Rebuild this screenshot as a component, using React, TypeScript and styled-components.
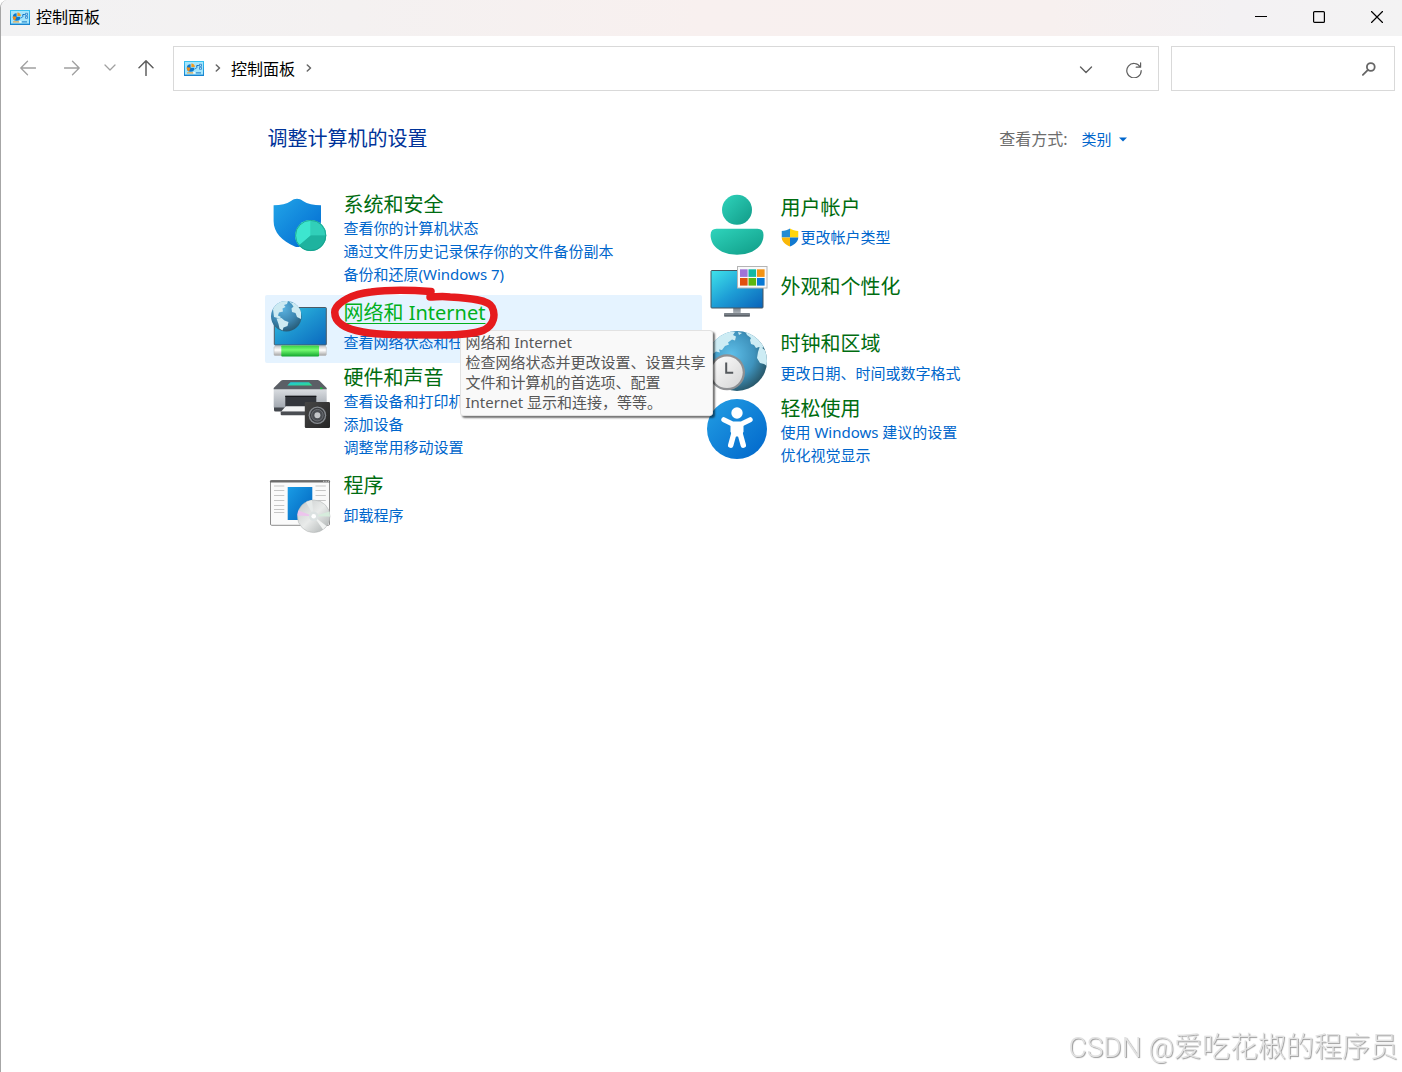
import React from 'react';
import styled, { createGlobalStyle } from 'styled-components';

const GlobalStyle = createGlobalStyle`
  *, *::before, *::after { box-sizing: border-box; }
  html, body { margin: 0; padding: 0; background: #ffffff; }
  body, button, input, select {
    font-family: "Noto Sans", "Noto Sans CJK SC", sans-serif;
    font-weight: 400;
  }
  button, select { margin: 0; padding: 0; border: 0; background: transparent; }
  svg { display: block; flex: none; }
`;

/* ---------- window frame ---------- */

const Window = styled.div`
  min-height: 100vh;
  border-left: 1px solid #a6a6a6;
  border-top-left-radius: 8px;
  background: #ffffff;
  overflow: hidden;
`;

const TitleBar = styled.header`
  display: flex;
  align-items: center;
  justify-content: space-between;
  height: 36px;
  padding: 0 0 2px 9px;
  background: linear-gradient(90deg, #f2f2f3 0%, #f4f1f1 25%, #f8f0ef 50%, #f7f0ef 75%, #f3f1f3 88%, #f3f3f3 100%);
`;

const Title = styled.h1`
  display: flex;
  align-items: center;
  gap: 6px;
  margin: 0;
  font-size: 16px;
  line-height: 24px;
  font-weight: 400;
  color: #000000;
`;

const WindowControls = styled.div`
  display: flex;
  margin-right: -4px;
`;

const ControlButton = styled.button`
  display: flex;
  align-items: center;
  justify-content: center;
  width: 58px;
  height: 34px;
  color: #000000;
`;

/* ---------- navigation ---------- */

const NavBar = styled.nav`
  display: flex;
  align-items: center;
  padding: 10px 7px 10px 5px;
`;

const NavButton = styled.button<{ $width: number; $active?: boolean }>`
  display: flex;
  align-items: center;
  justify-content: center;
  width: ${p => p.$width}px;
  height: 44px;
  padding-bottom: 2px;
  color: ${p => (p.$active ? '#5f5f5f' : '#a0a0a0')};
`;

const AddressButton = styled(NavButton)`
  height: 43px;
  padding: 2px 0 0;
`;

const AddressBar = styled.div`
  display: flex;
  align-items: center;
  flex: 1;
  height: 45px;
  margin: 0 12px 0 7px;
  padding: 0 0 0 10px;
  border: 1px solid #d9d9d9;
  color: #666666;
`;

const Crumb = styled.button`
  font-size: 16px;
  line-height: 24px;
  color: #000000;
`;

const CrumbArrow = styled.span`
  display: flex;
  justify-content: center;
  width: 27px;
  padding-bottom: 2px;
`;

const Spacer = styled.div`
  flex: 1;
`;

const SearchBox = styled.label`
  display: flex;
  align-items: center;
  width: 224px;
  height: 45px;
  padding: 0 18px 0 10px;
  border: 1px solid #d9d9d9;
  color: #666666;
`;

const SearchInput = styled.input`
  flex: 1;
  min-width: 0;
  border: 0;
  outline: 0;
  background: transparent;
  font-size: 15px;
`;

/* ---------- content ---------- */

const Content = styled.main`
  max-width: 874px;
  margin: 0 auto;
  padding-top: 26px;
`;

const ContentHeader = styled.div`
  display: flex;
  align-items: center;
  justify-content: space-between;
  padding: 0 10px 0 3px;
  margin-bottom: 39px;
`;

const PageHeading = styled.h2`
  margin: 0;
  font-size: 20px;
  line-height: 24px;
  font-weight: 400;
  color: #003399;
`;

const ViewBy = styled.div`
  display: flex;
  align-items: center;
  font-size: 15px;
  line-height: 24px;
  color: #6d6d6d;
`;

const ViewLabel = styled.label`
  margin-right: 14px;
  font-size: 16px;
`;

const ViewSelect = styled.select`
  appearance: none;
  font-size: 15px;
  line-height: 24px;
  color: #0066cc;
`;

const Caret = styled.svg`
  margin-left: 6px;
  margin-right: 2px;
  pointer-events: none;
`;

const Columns = styled.div`
  display: grid;
  grid-template-columns: 1fr 1fr;
  align-items: start;
`;

const Category = styled.section<{ $hot?: boolean }>`
  position: relative;
  display: flex;
  gap: 11px;
  min-height: 68px;
  border-radius: 2px;
  background: ${p => (p.$hot ? '#e5f3ff' : 'transparent')};
`;

type Spread = 'list' | 'pair' | 'alone';
const topPadding: Record<Spread, number> = { list: 3, pair: 6, alone: 17 };

const CategoryText = styled.div<{ $spread: Spread }>`
  display: flex;
  flex-direction: column;
  align-items: flex-start;
  padding-top: ${p => topPadding[p.$spread]}px;
  padding-bottom: ${p => (p.$spread === 'list' ? 9 : 0)}px;
`;

const CategoryTitle = styled.a<{ $hot?: boolean; $spread: Spread }>`
  margin-bottom: ${p => (p.$spread === 'pair' ? 6 : 0)}px;
  font-size: 20px;
  line-height: 24px;
  white-space: nowrap;
  color: ${p => (p.$hot ? '#00b01c' : '#006c10')};
  text-decoration: ${p => (p.$hot ? 'underline' : 'none')};
  text-decoration-thickness: 1px;
  text-underline-offset: 3px;
`;

const TaskLink = styled.a`
  display: flex;
  align-items: center;
  gap: 2px;
  font-size: 15px;
  line-height: 23px;
  white-space: nowrap;
  color: #0066cc;
  text-decoration: none;
`;

const Tooltip = styled.div`
  position: absolute;
  left: 195px;
  top: 35px;
  z-index: 2;
  width: 253px;
  padding: 1px 4px 3px 5px;
  border: 1px solid #e2e2e2;
  border-radius: 3px;
  background: #f9f9f9;
  box-shadow: 2px 2px 2px rgba(0, 0, 0, 0.55);
  font-size: 15px;
  line-height: 20px;
  color: #575757;
`;

const Scribble = styled.svg`
  position: absolute;
  left: 65px;
  top: -10px;
  z-index: 3;
  pointer-events: none;
`;

const Watermark = styled.div`
  position: fixed;
  right: 4px;
  bottom: 4px;
  font-family: Roboto, "Noto Sans CJK SC", sans-serif;
  font-size: 28px;
  line-height: 40px;
  font-weight: 300;
  color: #e2e2e2;
  text-shadow: 1px 1px 1px #999999;
  white-space: nowrap;
`;

/* ---------- drawings ---------- */

const PanelIcon = ({ id }: { id: string }) => (
  <svg width="20" height="15" viewBox="0 0 20 15" aria-hidden="true">
    <defs>
      <linearGradient id={id} x1="0" y1="0" x2="0" y2="1">
        <stop offset="0" stopColor="#38c3f2" />
        <stop offset="1" stopColor="#1681cf" />
      </linearGradient>
    </defs>
    <rect width="20" height="15" fill={`url(#${id})`} />
    <rect x="1" y="1" width="18" height="12.6" fill="#a5e5fb" />
    <path d="M6.600 3.200v3.600h3.800A3.800 3.800 0 1 1 6.600 3.200z" fill="#0c78cc" />
    <path d="M3 6.200a3.600 3.600 0 0 0 2 4.200l1.600-3.600z" fill="#ee8b16" />
    <path d="M7.400 2.600A3.500 3.500 0 0 1 10.800 6H7.400z" fill="#f29a1f" />
    <path d="M11 8.300l1.800-1.800V4.500h2" fill="none" stroke="#1270c2" strokeWidth="1" />
    <path d="M15.500 3.300h2v2h-2zM15.500 6.300h2v2h-2z" fill="#c9effc" stroke="#1270c2" strokeWidth="0.700" />
    <path d="M3 11.900h7" stroke="#f49b2a" strokeWidth="1" />
    <path d="M9 11.900h2" stroke="#fff" strokeWidth="1.400" />
    <path d="M12 11.900h5" stroke="#167ac8" strokeWidth="1" />
  </svg>
);

const Line = ({ w, h, d, sw = 1.3 }: { w: number; h: number; d: string; sw?: number }) => (
  <svg width={w} height={h} viewBox={`0 0 ${w} ${h}`} fill="none" stroke="currentColor" strokeWidth={sw} strokeLinecap="round" strokeLinejoin="round" aria-hidden="true">
    <path d={d} />
  </svg>
);

const Art = ({ children }: { children: React.ReactNode }) => (
  <svg width="68" height="68" viewBox="0 0 68 68" aria-hidden="true">{children}</svg>
);

const Grad = ({ id, from, to, mid }: { id: string; from: string; to: string; mid?: string }) => (
  <linearGradient id={id} x1="0" y1="0" x2="1" y2="1">
    <stop offset="0" stopColor={from} />
    {mid && <stop offset="0.5" stopColor={mid} />}
    <stop offset="1" stopColor={to} />
  </linearGradient>
);

const SecurityArt = () => (
  <Art>
    <defs>
      <Grad id="shieldBlue" from="#22a5e8" to="#0067cf" />
    </defs>
    <path d="M32 8.7c2.200 0 4 .8 6 2.200 4.500 3 10.500 4.300 18 4.300V31c0 12-8.500 20.500-21 25.500-1.800.7-3.500.7-5.200 0C17 51 8.600 42.500 8.600 31V15.200c7.400 0 13-1.300 17.400-4.300 2-1.400 3.800-2.200 6-2.200z" fill="url(#shieldBlue)" />
    <circle cx="45.700" cy="45.500" r="15.500" fill="#27bca6" />
    <path d="M45.700 45.500V30A15.500 15.500 0 0 0 34 55.600z" fill="#3de6cf" />
    <path d="M45.700 45.500V30a15.500 15.500 0 0 1 15.500 15.500z" fill="#31cfb9" />
    <path d="M45.700 45.500h15.500A15.500 15.500 0 0 1 34 55.600z" fill="#1eb39f" />
    <circle cx="45.700" cy="45.500" r="15.100" fill="none" stroke="#169985" strokeWidth="0.700" />
  </Art>
);

const NetworkArt = () => (
  <Art>
    <defs>
      <Grad id="netScreen" from="#35c8e4" mid="#1d94d0" to="#0a68be" />
      <radialGradient id="netGlobe" cx="0.4" cy="0.25" r="0.800">
        <stop offset="0" stopColor="#5ab2df" />
        <stop offset="0.550" stopColor="#3d87b2" />
        <stop offset="1" stopColor="#24556f" />
      </radialGradient>
      <clipPath id="netClip"><circle cx="21.300" cy="21.300" r="15.300" /></clipPath>
      <linearGradient id="cableGreen" x1="0" y1="0" x2="0" y2="1">
        <stop offset="0" stopColor="#36cf45" />
        <stop offset="0.400" stopColor="#73fa70" />
        <stop offset="1" stopColor="#12a52f" />
      </linearGradient>
      <linearGradient id="cableWhite" x1="0" y1="0" x2="0" y2="1">
        <stop offset="0" stopColor="#cfcfcf" />
        <stop offset="0.400" stopColor="#ffffff" />
        <stop offset="1" stopColor="#a5a5a5" />
      </linearGradient>
    </defs>
    <rect x="9.300" y="12.500" width="52" height="37.500" rx="0.800" fill="url(#netScreen)" stroke="#4c5a66" strokeWidth="1" />
    <circle cx="21.300" cy="21.300" r="15.300" fill="url(#netGlobe)" />
    <g clipPath="url(#netClip)" fill="#cdeaf2">
      <path d="M8 14c2-4 5-7 9-8.500l6 .5-1 3-3 1 1.500 2-3 1.500.5 3-4 1-1 3 3 1.500-1.500 1.500L9 22z" />
      <path d="M11.500 23.500l5-.500 3 2.500 4 1.500-1 4-4 1.500-1 3-3-2-1-4.500z" />
      <path d="M26 8l4-1 6 8v9l-4-2-1.500-4-3.500-1-.5-3.500 2-2z" />
      <path d="M24 6l3 .5-1 2z" />
    </g>
    <rect x="9" y="51.500" width="52.300" height="9" rx="1" fill="url(#cableWhite)" stroke="#b5b5b5" strokeWidth="0.500" />
    <rect x="16.300" y="50.500" width="37.700" height="11" rx="0.800" fill="url(#cableGreen)" />
  </Art>
);

const PrinterArt = () => (
  <Art>
    <defs>
      <linearGradient id="printBody" x1="0" y1="0" x2="0" y2="1">
        <stop offset="0" stopColor="#dcdfe3" />
        <stop offset="1" stopColor="#a2a8b0" />
      </linearGradient>
      <Grad id="printGlow" from="#1dc7e4" to="#32dc81" />
      <Grad id="speaker" from="#464646" to="#252525" />
    </defs>
    <path d="M9 43h53v4q0 1.500-1.500 1.500h-50Q9 48.500 9 47z" fill="#44484e" />
    <path d="M8.700 25.500h53V44.500h-53z" fill="url(#printBody)" />
    <path d="M18 17h34.500q1 0 2 .8l7.200 7.200v1.300h-53V25l7.300-7.200q.8-.8 2-.8z" fill="#5b5f66" />
    <path d="M25.500 19.300h18.500L47.300 22.600H22.300z" fill="url(#printGlow)" />
    <rect x="55" y="24.500" width="2.500" height="1.600" fill="#12bd38" />
    <path d="M20.300 32.800h31V44.500h-31z" fill="#33363c" />
    <path d="M20.300 32.800h31V34h-31z" fill="#17191d" />
    <path d="M20.800 43.300H42v5.500H16z" fill="#f2f3f4" />
    <path d="M15.700 48.500H42v3.800H16.700q-1 0-1-1z" fill="#4a4d52" />
    <rect x="39.800" y="39" width="25.200" height="26" rx="1.200" fill="url(#speaker)" />
    <circle cx="52.400" cy="52.200" r="8.800" fill="#85898e" />
    <circle cx="52.400" cy="52.200" r="7.500" fill="#3a3c40" />
    <circle cx="52.400" cy="52.200" r="5.800" fill="#4a4d52" stroke="#888c91" strokeWidth="0.600" />
    <circle cx="52.400" cy="52.200" r="3" fill="#c4c6c9" />
  </Art>
);

const lineRows = [18, 22.500, 27.500, 32.500, 37.500, 41.500, 44.500];

const ProgramsArt = () => (
  <Art>
    <defs>
      <Grad id="progBlue" from="#1a9ce5" to="#0063be" />
      <Grad id="disc" from="#c4c8c8" mid="#e9ebea" to="#a7acac" />
    </defs>
    <rect x="5.500" y="12.500" width="59" height="44.800" rx="1.200" fill="#fafafa" stroke="#8c8c8c" />
    <path d="M5 13.200q0-1 1-1h58q1 0 1 1v1.300H5z" fill="#6c6c6c" />
    <path d="M58 13.300h1.300M60.500 13.300h1.300M62.800 13.300h1.200" stroke="#ddd" strokeWidth="0.900" />
    <rect x="22.700" y="19" width="24.600" height="33" fill="url(#progBlue)" />
    {lineRows.map(y => (
      <path key={y} d={`M9 ${y}h10.300M50.500 ${y}h10.300`} stroke="#c6c6c6" strokeWidth="1" />
    ))}
    <circle cx="48.700" cy="48.300" r="16.300" fill="url(#disc)" stroke="#acb0b0" strokeWidth="0.500" />
    <path d="M48.700 48.300 33.300 42.500l-1 5z" fill="#edc4ed" />
    <path d="M48.700 48.300 41 33.900l6-1.900z" fill="#e6eae9" />
    <path d="M48.700 48.300 58 61.500l3.500-3.500z" fill="#f1f3f2" />
    <path d="M48.700 48.300 64.500 43.500l.5 5z" fill="#d6ecdc" />
    <circle cx="48.700" cy="48.300" r="4.800" fill="#dce2e2" />
    <circle cx="48.700" cy="48.300" r="2.300" fill="#ffffff" />
  </Art>
);

const UserArt = () => (
  <Art>
    <defs>
      <Grad id="userHead" from="#2fd4bc" to="#119a87" />
      <Grad id="userBody" from="#2fd4bc" to="#0f9b86" />
    </defs>
    <circle cx="35" cy="19.800" r="15" fill="url(#userHead)" />
    <path d="M14.500 38.800h41q6 0 6 6.200C61.500 57 50 64.700 35 64.700S8.600 57 8.600 45q0-6.200 5.900-6.200z" fill="url(#userBody)" />
  </Art>
);

const swatches = ['#a074d8', '#13b8a4', '#f39314', '#e1500d', '#5bb70e', '#0878d4'];

const AppearanceArt = () => (
  <Art>
    <defs>
      <Grad id="apScreen" from="#3fe3ea" mid="#1e9ed6" to="#0a62b9" />
      <linearGradient id="apStand" x1="0" y1="0" x2="0" y2="1">
        <stop offset="0" stopColor="#7e858c" />
        <stop offset="1" stopColor="#b5bbc1" />
      </linearGradient>
    </defs>
    <rect x="31.200" y="50" width="7.500" height="6" fill="url(#apStand)" />
    <rect x="22" y="55" width="26" height="3.500" rx="0.600" fill="#7b8289" />
    <path d="M22.500 57.900h25" stroke="#454b52" strokeWidth="1" />
    <rect x="9" y="12.500" width="52" height="37.500" rx="0.800" fill="url(#apScreen)" stroke="#46545f" />
    <rect x="35.500" y="8.500" width="29.500" height="21.500" fill="#fafafa" stroke="#b4b4b4" />
    {swatches.map((color, i) => (
      <rect key={color} x={38 + (i % 3) * 8.500} y={11.300 + Math.floor(i / 3) * 8.700} width="7.600" height="7.600" fill={color} />
    ))}
  </Art>
);

const ClockArt = () => (
  <Art>
    <defs>
      <radialGradient id="clockGlobe" cx="0.400" cy="0.400" r="0.650">
        <stop offset="0" stopColor="#5ebfe9" />
        <stop offset="0.600" stopColor="#3f93bd" />
        <stop offset="1" stopColor="#265465" />
      </radialGradient>
      <clipPath id="clockClip"><circle cx="35" cy="34.900" r="30" /></clipPath>
      <Grad id="clockFace" from="#ffffff" to="#d4d4d4" />
    </defs>
    <circle cx="35" cy="34.900" r="30" fill="url(#clockGlobe)" />
    <g clipPath="url(#clockClip)" fill="#cdecf4">
      <path d="M4 24C8 12 18 5 29 5l4 1-2 3 3 1.500-1 4-3-1-4 3 1 2-4 1.500-3 4-3-.5 1 3-4-1-4 3-6 3z" />
      <path d="M43 5l6 1 9 8 4 7-2 1-3-1-3 1-2-3-3-1-1-4 1-2-4-3z" />
      <path d="M58 20l7 6v14l-3-2-4-1-3-5 1-6z" />
      <path d="M36 6l4 1-3 2z" />
    </g>
    <circle cx="25" cy="46.300" r="18" fill="#8e9093" />
    <circle cx="25" cy="46.300" r="15.700" fill="url(#clockFace)" />
    <path d="M24.200 36.500v10.300h7" fill="none" stroke="#55595d" strokeWidth="2" />
  </Art>
);

const EaseArt = () => (
  <Art>
    <defs>
      <Grad id="easeBlue" from="#239fe4" to="#0065ca" />
    </defs>
    <circle cx="35" cy="35" r="30" fill="url(#easeBlue)" />
    <circle cx="35" cy="19" r="5.700" fill="#ffffff" />
    <path d="M21.800 25.700L30.500 30h9L48.200 25.700" fill="none" stroke="#ffffff" strokeWidth="5" strokeLinecap="round" strokeLinejoin="round" />
    <path d="M28.500 28h13v9.500l-2 5h-9l-2-5z" fill="#ffffff" />
    <path d="M28.700 51.200L32.200 38.500h5.600L41.300 51.200" fill="none" stroke="#ffffff" strokeWidth="5.400" strokeLinecap="round" strokeLinejoin="round" />
  </Art>
);

const UacShield = () => (
  <svg width="18" height="19" viewBox="1 0 17 19" aria-hidden="true">
    <defs>
      <clipPath id="uacClip">
        <path d="M9.500.5c2.500 1.700 5 2.400 8.500 2.500v5.500c0 4.600-3.500 8-8.500 10-5-2-8.500-5.400-8.500-10V3C4.500 2.900 7 2.200 9.500.5z" />
      </clipPath>
    </defs>
    <g clipPath="url(#uacClip)">
      <path d="M0 0h9.500v9.500H0z" fill="#238bd3" />
      <path d="M9.500 0H19v9.500H9.500z" fill="#ffd50b" />
      <path d="M0 9.500h9.500V19H0z" fill="#f9b708" />
      <path d="M9.500 9.500H19V19H9.500z" fill="#1279d0" />
    </g>
  </svg>
);

/* ---------- data ---------- */

type Item = {
  title: string;
  art: React.ReactNode;
  links: string[];
  spread: Spread;
  hot?: boolean;
  shield?: boolean;
};

const leftItems: Item[] = [
  {
    title: '系统和安全',
    art: <SecurityArt />,
    links: ['查看你的计算机状态', '通过文件历史记录保存你的文件备份副本', '备份和还原(Windows 7)'],
    spread: 'list',
  },
  { title: '网络和 Internet', art: <NetworkArt />, links: ['查看网络状态和任务'], spread: 'pair', hot: true },
  {
    title: '硬件和声音',
    art: <PrinterArt />,
    links: ['查看设备和打印机', '添加设备', '调整常用移动设置'],
    spread: 'list',
  },
  { title: '程序', art: <ProgramsArt />, links: ['卸载程序'], spread: 'pair' },
];

const rightItems: Item[] = [
  { title: '用户帐户', art: <UserArt />, links: ['更改帐户类型'], spread: 'pair', shield: true },
  { title: '外观和个性化', art: <AppearanceArt />, links: [], spread: 'alone' },
  { title: '时钟和区域', art: <ClockArt />, links: ['更改日期、时间或数字格式'], spread: 'pair' },
  { title: '轻松使用', art: <EaseArt />, links: ['使用 Windows 建议的设置', '优化视觉显示'], spread: 'list' },
];

const CategoryEntry = ({ item }: { item: Item }) => (
  <Category $hot={item.hot}>
    {item.art}
    <CategoryText $spread={item.spread}>
      <CategoryTitle href="#" $hot={item.hot} $spread={item.spread}>{item.title}</CategoryTitle>
      {item.links.map(link => (
        <TaskLink key={link} href="#">
          {item.shield && <UacShield />}
          {link}
        </TaskLink>
      ))}
    </CategoryText>
    {item.hot && (
      <>
        <Tooltip role="tooltip">
          网络和 Internet
          <br />
          检查网络状态并更改设置、设置共享文件和计算机的首选项、配置 Internet 显示和连接，等等。
        </Tooltip>
        <Scribble width="170" height="56" viewBox="330 285 170 56" aria-hidden="true">
          <path
            d="M431 291.500C410 290 386 290 371 292C352 294 338 302 335 310C333 322 345 329 363 332C380 335 400 335 440 335C460 335 475 334 484 330C494 325 496 315 492 307C488 300 470 298 450 297C442 296 436 297 430 297"
            fill="none"
            stroke="#e61b1e"
            strokeWidth="7.500"
            strokeLinecap="round"
            strokeLinejoin="round"
          />
        </Scribble>
      </>
    )}
  </Category>
);

export default function App() {
  return (
    <>
      <GlobalStyle />
      <Window>
        <TitleBar>
          <Title>
            <PanelIcon id="panelTitle" />
            控制面板
          </Title>
          <WindowControls>
            <ControlButton aria-label="最小化">
              <svg width="12" height="12" viewBox="0 0 12 12"><path d="M0 5.500h12" stroke="currentColor" /></svg>
            </ControlButton>
            <ControlButton aria-label="最大化">
              <svg width="12" height="12" viewBox="0 0 12 12" fill="none" stroke="currentColor" strokeWidth="1.200">
                <rect x="0.600" y="0.600" width="10.800" height="10.800" rx="1" />
              </svg>
            </ControlButton>
            <ControlButton aria-label="关闭">
              <Line w={12} h={12} d="M.5.5l11 11M11.500.5l-11 11" sw={1.200} />
            </ControlButton>
          </WindowControls>
        </TitleBar>

        <NavBar>
          <NavButton $width={44} aria-label="后退"><Line w={16} h={16} d="M15.500 8H1M7.500 1.200L.8 8l6.700 6.800" /></NavButton>
          <NavButton $width={44} aria-label="前进"><Line w={16} h={16} d="M.5 8H15M8.500 1.200L15.200 8l-6.700 6.800" /></NavButton>
          <NavButton $width={32} aria-label="最近位置"><Line w={12} h={8} d="M1 1l5 5 5-5" /></NavButton>
          <NavButton $width={40} $active aria-label="向上"><Line w={16} h={16} d="M8 15.500V1M1 7.800L8 .8l7 7" sw={1.500} /></NavButton>
          <AddressBar>
            <PanelIcon id="panelAddress" />
            <CrumbArrow><Line w={6} h={8} d="M1.300 1L4.500 4 1.300 7" sw={1.500} /></CrumbArrow>
            <Crumb>控制面板</Crumb>
            <CrumbArrow><Line w={6} h={8} d="M1.300 1L4.500 4 1.300 7" sw={1.500} /></CrumbArrow>
            <Spacer />
            <AddressButton $width={48} $active aria-label="展开地址栏"><Line w={14} h={8} d="M1.500 1L7 6.500 12.500 1" sw={1.400} /></AddressButton>
            <AddressButton $width={48} $active aria-label="刷新">
              <Line w={16} h={16} d="M14.200 5A7.200 7.200 0 1 0 15.200 8.500M14.600.800v4.400h-4.400" sw={1.200} />
            </AddressButton>
          </AddressBar>
          <SearchBox>
            <SearchInput type="search" aria-label="搜索控制面板" />
            <svg width="14" height="14" viewBox="0 0 14 14" fill="none" stroke="currentColor" aria-hidden="true">
              <circle cx="8.800" cy="5" r="3.900" strokeWidth="1.800" />
              <path d="M5.900 7.900L.9 12.900" strokeWidth="1.800" strokeLinecap="round" />
            </svg>
          </SearchBox>
        </NavBar>

        <Content>
          <ContentHeader>
            <PageHeading>调整计算机的设置</PageHeading>
            <ViewBy>
              <ViewLabel htmlFor="view-by">查看方式:</ViewLabel>
              <ViewSelect id="view-by" defaultValue="category">
                <option value="category">类别</option>
              </ViewSelect>
              <Caret width="8" height="5" viewBox="0 0 8 5" aria-hidden="true"><path d="M0 .5h8L4 4.500z" fill="#0066cc" /></Caret>
            </ViewBy>
          </ContentHeader>
          <Columns>
            <div>{leftItems.map(item => <CategoryEntry key={item.title} item={item} />)}</div>
            <div>{rightItems.map(item => <CategoryEntry key={item.title} item={item} />)}</div>
          </Columns>
        </Content>
      </Window>
      <Watermark>CSDN @爱吃花椒的程序员</Watermark>
    </>
  );
}
